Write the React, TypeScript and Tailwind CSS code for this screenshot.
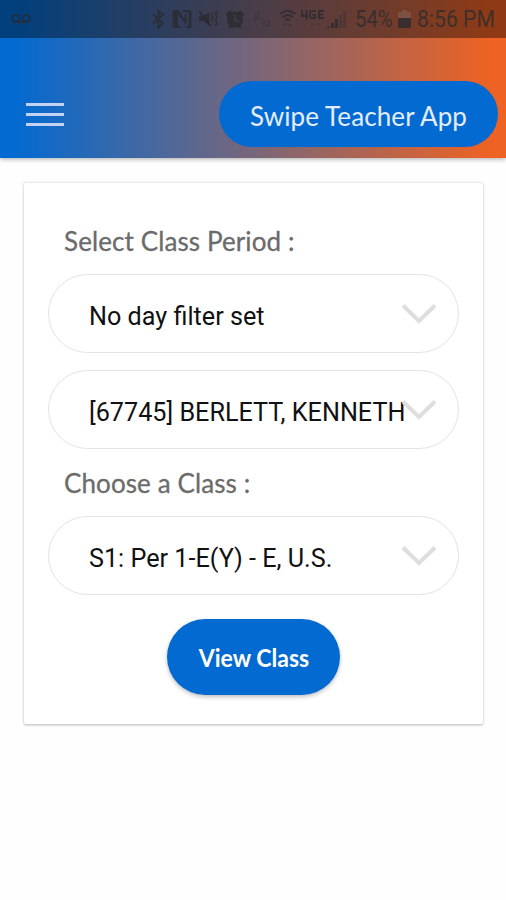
import { useState } from "react";

function Chevron() {
  return (
    <svg
      width="36"
      height="22"
      viewBox="0 0 36 22"
      fill="none"
      stroke="#dedede"
      strokeWidth="4"
      className="pointer-events-none absolute right-[21px] top-[28px]"
    >
      <path d="M2 2.5 18 18 34 2.5" />
    </svg>
  );
}

function SelectField({ value, className = "" }: { value: string; className?: string }) {
  return (
    <button
      type="button"
      className={`relative block h-[79px] w-full rounded-full border-[1.5px] border-[#e3e3e3] bg-white pl-10 pt-[6px] text-left font-['Roboto',sans-serif] text-[25.2px] text-[#111] ${className}`}
    >
      <span className="block whitespace-nowrap">{value}</span>
      <Chevron />
    </button>
  );
}

function StatusBar() {
  return (
    <div className="flex h-[38px] items-center bg-black/40 pl-[11px] text-[#2b2b2f]/80">
      {/* voicemail */}
      <svg width="20" height="12" viewBox="0 0 20 12" fill="none" stroke="currentColor" strokeWidth="1.8">
        <circle cx="4.8" cy="5.5" r="3.6" />
        <circle cx="15.2" cy="5.5" r="3.6" />
        <path d="M4.8 9.2h10.4" />
      </svg>

      {/* bluetooth */}
      <svg className="ml-[121px]" width="13" height="20" viewBox="0 0 13 20" fill="none" stroke="currentColor" strokeWidth="2">
        <path d="m1 5.5 10 9-4.7 4V1.5l4.7 4-10 9" />
      </svg>

      {/* nfc */}
      <svg className="ml-[7px]" width="20" height="20" viewBox="0 0 20 20" fill="currentColor">
        <path d="M2.5 1H7l5.5 9V5h2v11.5L6 5.500V17h2.500v2h-6Q.5 19 .5 17V3q0-2 2-2Z" />
        <path d="M11 1h6.500q2 0 2 2v14q0 2-2 2H13l3.500-2V3.500L11 3Z" />
      </svg>

      {/* muted with vibration */}
      <svg className="ml-[6px]" width="21" height="20" viewBox="0 0 21 20" fill="none" stroke="currentColor" strokeWidth="2">
        <path d="M1 7h4.5l6-4v14l-6-5H1Z" fill="currentColor" stroke="none" />
        <path d="m1 2 12 15" />
        <path d="m15 3-1.5 2.5L15 8l-1.5 2.5L15 13M19 2l-1.5 3L19 8l-1.5 3 1.5 3-1.5 3" strokeWidth="1.5" />
      </svg>

      {/* alarm */}
      <svg className="ml-[6px]" width="20" height="20" viewBox="0 0 20 20" fill="currentColor">
        <circle cx="10" cy="10.5" r="8" />
        <path d="M.5 5.5 5 1l2 2-4.8 4.5ZM19.5 5.5 15 1l-2 2 4.8 4.5ZM3 19l2-3 2 1-1.5 2.5ZM17 19l-2-3-2 1 1.5 2.5Z" />
        <path d="M10 6v5l3.5 1.8" fill="none" stroke="#3e3e4c" strokeWidth="1.5" />
      </svg>

      {/* idle call indicator */}
      <svg className="ml-[8px] opacity-30" width="18" height="20" viewBox="0 0 18 20" fill="none" stroke="currentColor" strokeWidth="2">
        <path d="M2 5v8M5 2v8M2 9h6M11 11v6h5v-5h-5" />
      </svg>

      {/* wifi */}
      <svg className="ml-[8px]" width="17" height="20" viewBox="0 0 17 20" fill="none" stroke="currentColor" strokeWidth="1.9">
        <path d="M1 5q7.5-6.5 15 0M3.5 8.2q5-4.4 10 0M6 11.3q2.5-2.2 5 0" />
        <path d="m6 14-2 3h4ZM11 18l-2-3h4Z" fill="currentColor" stroke="none" opacity=".5" />
      </svg>

      {/* 4G LTE */}
      <svg className="ml-[4px]" width="24" height="20" viewBox="0 0 24 20" fill="none" stroke="currentColor" strokeWidth="1.9">
        <path d="M2 1v6h6M6.5 1v10M16 2h-4.5Q10 2 10 3.5v4Q10 9 11.5 9H15V6h-2.5M24 2h-5v7h5M19 5.5h4" />
        <path d="m12 13-2 3h4ZM18 17l-2-3h4Z" fill="currentColor" stroke="none" opacity=".4" />
      </svg>

      {/* signal */}
      <svg className="ml-[3px]" width="19" height="20" viewBox="0 0 19 20" fill="currentColor">
        <path d="M0 17.5h3V19H0ZM4 14h3v5H4ZM8 10h3v9H8Z" />
        <path d="M12 6h3v13h-3ZM16 2h3v17h-3Z" opacity=".45" />
      </svg>

      <span className="ml-[9px] w-[38px] origin-left scale-x-[.88] whitespace-nowrap pt-[3px] font-['Roboto',sans-serif] text-[23px]">54%</span>

      {/* battery */}
      <svg className="ml-[5px]" width="13" height="19" viewBox="0 0 13 19" fill="currentColor">
        <path d="M4 0h5v2h4v6H0V2h4Z" fill="#8b7a74" opacity=".35" />
        <path d="M0 8h13v10H0Z" />
      </svg>

      <span className="ml-[6px] origin-left scale-x-[.92] whitespace-nowrap pt-[3px] font-['Roboto',sans-serif] text-[23px]">8:56 PM</span>
    </div>
  );
}

export default function App() {
  const [menuOpen, setMenuOpen] = useState(false);

  return (
    <div className="h-[900px] w-[506px] overflow-hidden bg-[#fefefe] font-['Lato',sans-serif]">
      <header className="h-[158px] bg-[linear-gradient(90deg,#036ad1_0%,#036ad1_3%,#ee6223_97%)] shadow-[0_1px_5px_rgba(0,0,0,0.35)]">
        <StatusBar />

        <div className="flex items-start justify-between pl-[26px] pr-2 pt-[43px]">
          <button
            type="button"
            aria-label="Menu"
            aria-expanded={menuOpen}
            onClick={() => setMenuOpen(!menuOpen)}
            className="mt-[22px] flex flex-col gap-[7px]"
          >
            <span className="h-[3px] w-[38px] bg-[#c3d2f2]" />
            <span className="h-[3px] w-[38px] bg-[#c3d2f2]" />
            <span className="h-[3px] w-[38px] bg-[#c3d2f2]" />
          </button>

          <div className="flex h-[66px] w-[279px] items-center justify-center rounded-full bg-[#036ad1] pt-[4px] text-[26px] tracking-[0.1px] text-[#e3edff]">
            <span className="whitespace-nowrap">Swipe Teacher App</span>
          </div>
        </div>
      </header>

      <main className="ml-6 mr-[23px] mt-[25px] h-[541px] rounded-[2px] bg-white px-6 pt-10 shadow-[0_0_2px_1px_rgba(0,0,0,0.1),0_2px_2px_rgba(0,0,0,0.12)]">
        <h2 className="h-[51px] whitespace-nowrap pl-4 text-[26px] leading-[36px] tracking-[0.1px] text-[#6b6b6b] [-webkit-text-stroke:0.3px_#6b6b6b]">
          Select Class Period :
        </h2>
        <SelectField value="No day filter set" />
        <SelectField value="[67745] BERLETT, KENNETH" className="mt-[17px]" />

        <h2 className="mt-4 h-[51px] whitespace-nowrap pl-4 text-[26px] leading-[36px] tracking-[0.1px] text-[#6b6b6b] [-webkit-text-stroke:0.3px_#6b6b6b]">
          Choose a Class :
        </h2>
        <SelectField value="S1: Per 1-E(Y) - E, U.S." />

        <button
          type="button"
          className="ml-[119px] mt-6 flex h-[76px] w-[173px] items-center justify-center rounded-full bg-[#036ad1] pt-[2px] text-[25px] font-bold text-white shadow-[0_2px_4px_rgba(0,0,0,0.25)]"
        >
          <span className="scale-x-[.92] whitespace-nowrap">View Class</span>
        </button>
      </main>
    </div>
  );
}
